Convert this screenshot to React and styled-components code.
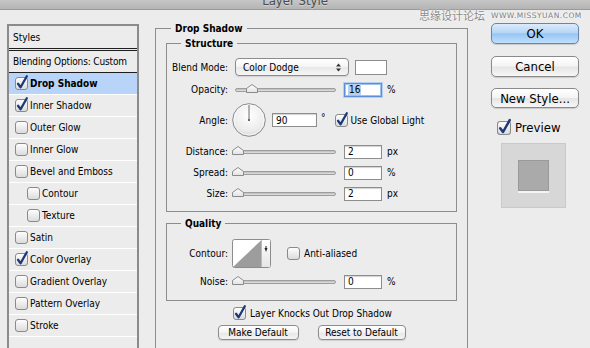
import React from "react";
import styled, { createGlobalStyle } from "styled-components";

const FONT = `"DejaVu Sans Condensed", "DejaVu Sans", "Liberation Sans", sans-serif`;

const Global = createGlobalStyle`
  html, body { margin: 0; padding: 0; background: #ececec; }
  body { font-family: ${FONT}; font-stretch: condensed; }
`;

const Page = styled.div`
  position: relative;
  width: 590px;
  height: 348px;
  overflow: hidden;
  background: #ececec;
  color: #000;
  font-family: ${FONT};
  font-stretch: condensed;
  font-size: 10px;
`;

const TitleBar = styled.div`
  height: 10px;
  box-sizing: border-box;
  border-bottom: 1px solid #9a9a9a;
  background: linear-gradient(#c6c6c6, #b4b4b4);
  display: flex;
  justify-content: center;
  align-items: flex-end;
  overflow: hidden;
`;

const Title = styled.div`
  font-size: 13px;
  line-height: 13px;
  color: #4b4b4b;
  margin-bottom: 2px;
  text-shadow: 0 1px 0 rgba(255, 255, 255, 0.35);
`;

const Watermark = styled.div`
  position: absolute;
  left: 419px;
  top: 9px;
  display: flex;
  align-items: center;
  gap: 6px;
  color: #8a8a8a;
  text-shadow: 0 0 2px #fff, 0 0 1px #fff;
`;

const WmCn = styled.span`
  font-family: "Noto Sans CJK SC", sans-serif;
  font-size: 11px;
  line-height: 12px;
`;

const WmEn = styled.span`
  font-family: "DejaVu Sans", sans-serif;
  font-stretch: normal;
  font-size: 7.5px;
  letter-spacing: 0.5px;
  color: #7a7a7a;
`;

const Body = styled.div`
  display: flex;
  align-items: flex-start;
`;

/* ---------- left styles list ---------- */
const StylesPanel = styled.div`
  margin: 14px 0 0 7px;
  width: 132px;
  height: 400px;
  box-sizing: border-box;
  border: 2px solid #8b8b8b;
  display: flex;
  flex-direction: column;
  flex: none;
`;

const PanelHead = styled.div`
  height: 22px;
  display: flex;
  align-items: center;
  padding-left: 4px;
  border-bottom: 3px double #1e1e1e;
`;

const PanelBlend = styled.div`
  height: 21px;
  display: flex;
  align-items: center;
  padding-left: 4px;
  border-bottom: 1px solid #1e1e1e;
  letter-spacing: -0.15px;
`;

const StyleItem = styled.div`
  height: 21px;
  display: flex;
  align-items: center;
  gap: 2px;
  padding-left: ${(p) => (p.$indent ? 18 : 6)}px;
  border-bottom: 1px solid #ffffff;
  background: ${(p) => (p.$selected ? "#b8d4f8" : "transparent")};
  font-weight: ${(p) => (p.$selected ? "bold" : "normal")};
`;

/* ---------- main column ---------- */
const Main = styled.div`
  margin: 12px 0 0 16px;
  width: 313px;
  flex: none;
`;

const Group = styled.fieldset`
  margin: ${(p) => p.$mt || 0}px 0 0 0;
  padding: ${(p) => p.$pad};
  border: 1px solid #8d8d8d;
  min-width: 0;
  min-height: ${(p) => p.$minH || 0}px;
  box-sizing: border-box;
`;

const Legend = styled.legend`
  margin-left: ${(p) => p.$indent}px;
  padding: 0 4px;
  font-weight: bold;
  font-size: 10px;
  line-height: 13px;
`;

const Rows = styled.div`
  display: flex;
  flex-direction: column;
  gap: 6px;
`;

const Row = styled.div`
  display: flex;
  align-items: center;
  height: ${(p) => p.$h || 15}px;
  margin-bottom: ${(p) => p.$mb || 0}px;
`;

const Label = styled.div`
  width: 61px;
  flex: none;
  text-align: right;
  margin-right: ${(p) => (p.$gap === undefined ? 7 : p.$gap)}px;
  white-space: nowrap;
`;

const Select = styled.div`
  width: 114px;
  height: 18px;
  box-sizing: border-box;
  border: 1px solid #8c8c8c;
  border-radius: 4px;
  background: linear-gradient(#ffffff, #f4f4f4 50%, #e8e8e8 51%, #f6f6f6);
  display: flex;
  align-items: center;
  justify-content: space-between;
  padding: 0 7px 0 7px;
  box-shadow: 0 1px 1px rgba(0, 0, 0, 0.12);
`;

const Swatch = styled.div`
  width: 32px;
  height: 15px;
  box-sizing: border-box;
  margin-left: 6px;
  border: 1px solid #8c8c8c;
  background: #fff;
`;

const SliderWrap = styled.div`
  position: relative;
  width: 101px;
  height: 15px;
  flex: none;
  display: flex;
  align-items: center;
`;

const Track = styled.div`
  width: 100%;
  height: 4px;
  margin-top: 1px;
  box-sizing: border-box;
  border: 1px solid #9d9d9d;
  border-radius: 3px;
  background: linear-gradient(#b9b9b9, #e4e4e4);
`;

const Thumb = styled.svg`
  position: absolute;
  top: 2px;
  overflow: visible;
`;

const NumField = styled.div`
  width: ${(p) => p.$w || 38}px;
  height: ${(p) => p.$h || 14}px;
  box-sizing: border-box;
  margin-left: ${(p) => (p.$ml === undefined ? 8 : p.$ml)}px;
  border: 1px solid ${(p) => (p.$focus ? "#5e8fd6" : "#8d8d8d")};
  box-shadow: ${(p) =>
    p.$focus
      ? "inset 0 0 0 1px #9dc0ee, 0 0 0 1px #b7d0f2"
      : "inset 0 1px 1px rgba(0,0,0,0.18)"};
  background: #fff;
  display: flex;
  align-items: center;
  padding-left: 3px;
  flex: none;
`;

const Selected = styled.span`
  background: #b3d1f5;
  padding: 0 1px;
`;

const Unit = styled.span`
  margin-left: ${(p) => p.$ml || 5}px;
  align-self: ${(p) => (p.$top ? "flex-start" : "center")};
  margin-top: ${(p) => (p.$top ? 9 : 0)}px;
`;

const CheckLabel = styled.label`
  display: flex;
  align-items: center;
  gap: ${(p) => p.$gap || 3}px;
  margin-left: ${(p) => p.$ml || 0}px;
  margin-top: ${(p) => p.$mt || 0}px;
  white-space: nowrap;
`;

const CenterRow = styled.div`
  display: flex;
  justify-content: center;
  gap: ${(p) => p.$gap || 0}px;
  margin-top: ${(p) => p.$mt || 0}px;
  margin-left: ${(p) => p.$ml || 0}px;
`;

const SmallButton = styled.div`
  width: ${(p) => p.$w}px;
  height: 15px;
  box-sizing: border-box;
  border: 1px solid #8c8c8c;
  border-radius: 4px;
  background: linear-gradient(#ffffff, #f3f3f3 50%, #e6e6e6 51%, #f5f5f5);
  display: flex;
  align-items: center;
  justify-content: center;
  font-size: 10px;
  box-shadow: 0 1px 1px rgba(0, 0, 0, 0.12);
`;

/* ---------- right column ---------- */
const Side = styled.div`
  margin: 13px 0 0 23px;
  width: 88px;
  flex: none;
  display: flex;
  flex-direction: column;
`;

const DlgButton = styled.div`
  height: ${(p) => p.$h || 21}px;
  margin-top: ${(p) => p.$mt || 0}px;
  box-sizing: border-box;
  border: 1px solid ${(p) => (p.$primary ? "#6b84a8" : "#8a8a8a")};
  border-radius: 5px;
  background: ${(p) =>
    p.$primary
      ? "linear-gradient(#dcebfb, #b7d6f7 45%, #98c5f4 52%, #bfe0fc)"
      : "linear-gradient(#ffffff, #f4f4f4 48%, #e5e5e5 52%, #f7f7f7)"};
  display: flex;
  align-items: center;
  justify-content: center;
  font-size: 13px;
  box-shadow: 0 1px 1px rgba(0, 0, 0, 0.15);
`;

const PreviewBox = styled.div`
  width: 65px;
  height: 65px;
  margin: 8px 0 0 10px;
  box-sizing: border-box;
  border: 1px solid #c9c9c9;
  background: #d7d7d7;
  display: flex;
  align-items: center;
  justify-content: center;
`;

const PreviewSquare = styled.div`
  width: 31px;
  height: 31px;
  box-sizing: border-box;
  border: 1px solid #9a9a9a;
  background: #aaaaaa;
  box-shadow: 0 2px 0 #f4f4f4;
`;

const PreviewText = styled.span`
  font-size: 13px;
`;

/* ---------- drawings ---------- */
const CheckSvg = styled.svg`
  overflow: visible;
  flex: none;
`;

function CheckBox({ checked, size = 13 }) {
  return (
    <CheckSvg width={size} height={size} viewBox="0 0 13 13">
      <defs>
        <linearGradient id="cbg" x1="0" y1="0" x2="0" y2="1">
          <stop offset="0" stopColor="#ffffff" />
          <stop offset="1" stopColor="#dadada" />
        </linearGradient>
      </defs>
      <rect x="0.5" y="0.5" width="12" height="12" rx="2.5" fill="url(#cbg)" stroke="#8a8a8a" />
      {checked && (
        <path
          d="M3 6.8 L5.6 10.2 L11.8 -0.8"
          fill="none"
          stroke="#1c3a78"
          strokeWidth="2.3"
          strokeLinecap="round"
          strokeLinejoin="round"
        />
      )}
    </CheckSvg>
  );
}

function Slider({ pos }) {
  return (
    <SliderWrap>
      <Track />
      <Thumb width="12" height="9" viewBox="0 0 12 9" style={{ left: -3 + pos * 86 }}>
        <defs>
          <linearGradient id="thg" x1="0" y1="0" x2="0" y2="1">
            <stop offset="0" stopColor="#ffffff" />
            <stop offset="1" stopColor="#e2e2e2" />
          </linearGradient>
        </defs>
        <path d="M0.5 8.5 V4.5 L6 0.5 L11.5 4.5 V8.5 Z" fill="url(#thg)" stroke="#8a8a8a" />
      </Thumb>
    </SliderWrap>
  );
}

function Dial() {
  return (
    <svg width="34" height="34" viewBox="0 0 34 34" style={{ flex: "none" }}>
      <defs>
        <radialGradient id="dg" cx="0.5" cy="0.35" r="0.7">
          <stop offset="0" stopColor="#ffffff" />
          <stop offset="0.7" stopColor="#ececec" />
          <stop offset="1" stopColor="#cfcfcf" />
        </radialGradient>
      </defs>
      <circle cx="17" cy="17" r="16.3" fill="url(#dg)" stroke="#8a8a8a" />
      <circle cx="17" cy="17" r="15" fill="none" stroke="#ffffff" strokeOpacity="0.7" />
      <line x1="17" y1="17" x2="17" y2="2" stroke="#6a6a6a" strokeWidth="1" />
      <rect x="16" y="16" width="2" height="2" fill="#6a6a6a" />
    </svg>
  );
}

function SelectArrows() {
  return (
    <svg width="5" height="9" viewBox="0 0 5 9">
      <path d="M0 3.5 L2.5 0.5 L5 3.5 Z" fill="#333" />
      <path d="M0 5.5 L2.5 8.5 L5 5.5 Z" fill="#333" />
    </svg>
  );
}

function ContourPicker() {
  return (
    <svg width="39" height="29" viewBox="0 0 39 29" style={{ flex: "none", marginLeft: -3 }}>
      <defs>
        <linearGradient id="cpg" x1="0" y1="0" x2="0" y2="1">
          <stop offset="0" stopColor="#ffffff" />
          <stop offset="1" stopColor="#e6e6e6" />
        </linearGradient>
      </defs>
      <rect x="0.5" y="0.5" width="38" height="28" rx="2" fill="#fff" stroke="#8c8c8c" />
      <path d="M1 28 L29.5 1 V28 Z" fill="#9d9d9d" />
      <rect x="29.5" y="1" width="8.5" height="27" fill="url(#cpg)" />
      <line x1="29.5" y1="1" x2="29.5" y2="28" stroke="#bcbcbc" />
      <path d="M32.5 9 H35.5 L34 13 Z" fill="#222" />
      <rect x="33.5" y="7" width="1" height="3" fill="#222" />
    </svg>
  );
}

const styleItems = [
  { name: "Drop Shadow", checked: true, selected: true },
  { name: "Inner Shadow", checked: true },
  { name: "Outer Glow" },
  { name: "Inner Glow" },
  { name: "Bevel and Emboss" },
  { name: "Contour", indent: true },
  { name: "Texture", indent: true },
  { name: "Satin" },
  { name: "Color Overlay", checked: true },
  { name: "Gradient Overlay" },
  { name: "Pattern Overlay" },
  { name: "Stroke" },
];

const sliders = [
  { label: "Distance:", value: "2", unit: "px" },
  { label: "Spread:", value: "0", unit: "%" },
  { label: "Size:", value: "2", unit: "px" },
];

export default function App() {
  return (
    <Page>
      <Global />
      <TitleBar>
        <Title>Layer Style</Title>
      </TitleBar>
      <Watermark>
        <WmCn>思缘设计论坛</WmCn>
        <WmEn>WWW.MISSYUAN.COM</WmEn>
      </Watermark>
      <Body>
        <StylesPanel>
          <PanelHead>Styles</PanelHead>
          <PanelBlend>Blending Options: Custom</PanelBlend>
          {styleItems.map((s) => (
            <StyleItem key={s.name} $indent={s.indent} $selected={s.selected}>
              <CheckBox checked={s.checked} />
              <span>{s.name}</span>
            </StyleItem>
          ))}
        </StylesPanel>

        <Main>
          <Group $pad="0 10px" $minH={400}>
            <Legend $indent={5}>Drop Shadow</Legend>
            <Group $mt={2} $pad="8px 0 10px 0">
              <Legend $indent={14}>Structure</Legend>
              <Rows>
                <Row $h={18}>
                  <Label>Blend Mode:</Label>
                  <Select>
                    <span>Color Dodge</span>
                    <SelectArrows />
                  </Select>
                  <Swatch />
                </Row>
                <Row>
                  <Label>Opacity:</Label>
                  <Slider pos={0.16} />
                  <NumField $focus>
                    <Selected>16</Selected>
                  </NumField>
                  <Unit>%</Unit>
                </Row>
                <Row $h={34} $mb={1}>
                  <Label $gap={4}>Angle:</Label>
                  <Dial />
                  <NumField $w={45} $ml={6}>90</NumField>
                  <Unit $ml={4} $top>°</Unit>
                  <CheckLabel $ml={9} $gap={3}>
                    <CheckBox checked />
                    <span>Use Global Light</span>
                  </CheckLabel>
                </Row>
                {sliders.map((s) => (
                  <Row key={s.label}>
                    <Label>{s.label}</Label>
                    <Slider pos={0} />
                    <NumField>{s.value}</NumField>
                    <Unit>{s.unit}</Unit>
                  </Row>
                ))}
              </Rows>
            </Group>

            <Group $mt={5} $pad="9px 0 11px 0">
              <Legend $indent={14}>Quality</Legend>
              <Rows>
                <Row $h={29}>
                  <Label>Contour:</Label>
                  <ContourPicker />
                  <CheckLabel $ml={16} $gap={4}>
                    <CheckBox />
                    <span>Anti-aliased</span>
                  </CheckLabel>
                </Row>
                <Row>
                  <Label>Noise:</Label>
                  <Slider pos={0} />
                  <NumField>0</NumField>
                  <Unit>%</Unit>
                </Row>
              </Rows>
            </Group>

            <CenterRow $mt={6} $ml={2}>
              <CheckLabel $gap={4}>
                <CheckBox checked />
                <span>Layer Knocks Out Drop Shadow</span>
              </CheckLabel>
            </CenterRow>
            <CenterRow $mt={5} $gap={19}>
              <SmallButton $w={81}>Make Default</SmallButton>
              <SmallButton $w={88}>Reset to Default</SmallButton>
            </CenterRow>
          </Group>
        </Main>

        <Side>
          <DlgButton $primary>OK</DlgButton>
          <DlgButton $mt={12}>Cancel</DlgButton>
          <DlgButton $mt={11} $h={20}>New Style...</DlgButton>
          <CheckLabel $ml={6} $gap={4} $mt={12}>
            <CheckBox checked size={14} />
            <PreviewText>Preview</PreviewText>
          </CheckLabel>
          <PreviewBox>
            <PreviewSquare />
          </PreviewBox>
        </Side>
      </Body>
    </Page>
  );
}
